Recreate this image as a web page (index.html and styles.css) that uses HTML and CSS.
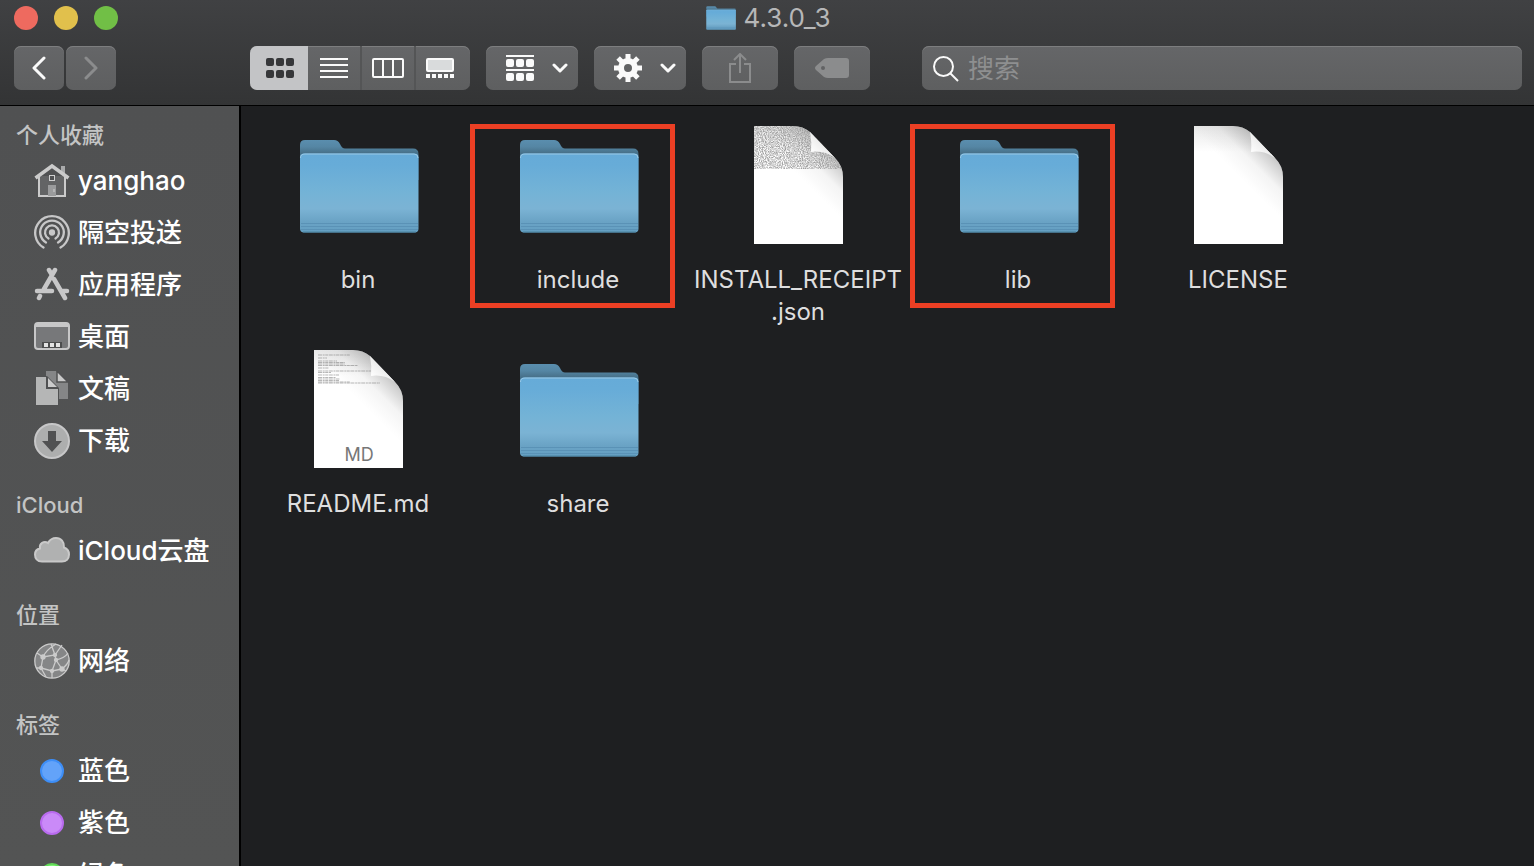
FILE: index.html
```html
<!DOCTYPE html>
<html lang="zh-CN">
<head>
<meta charset="utf-8">
<meta name="viewport" content="width=device-width, initial-scale=1">
<title>4.3.0_3</title>
<link rel="stylesheet" href="styles.css">
</head>
<body>
<svg class="defs" aria-hidden="true">
  <defs>
    <linearGradient id="folder-back" x1="0" y1="0" x2="0" y2="1">
      <stop offset="0" stop-color="#5a8eae"/><stop offset=".17" stop-color="#5586a4"/><stop offset=".35" stop-color="#456d85"/><stop offset="1" stop-color="#456d85"/>
    </linearGradient>
    <linearGradient id="folder-front" x1="0" y1="0" x2="0" y2="1">
      <stop offset="0" stop-color="#66abd8"/><stop offset=".15" stop-color="#67acd8"/><stop offset=".5" stop-color="#74b3d6"/><stop offset=".7" stop-color="#7bb3d4"/><stop offset=".86" stop-color="#6aa3c5"/><stop offset="1" stop-color="#649fc2"/>
    </linearGradient>
    <linearGradient id="page-shade" gradientUnits="userSpaceOnUse" x1="61" y1="52" x2="88" y2="25">
      <stop offset="0" stop-color="#777" stop-opacity="0"/><stop offset=".5" stop-color="#777" stop-opacity=".08"/><stop offset="1" stop-color="#777" stop-opacity=".4"/>
    </linearGradient>
    <linearGradient id="page-top" x1="0" y1="0" x2="0" y2="1">
      <stop offset="0" stop-color="#e9e9e9"/><stop offset=".22" stop-color="#fff"/>
    </linearGradient>
    <linearGradient id="page-curl" gradientUnits="userSpaceOnUse" x1="76" y1="32" x2="88" y2="20">
      <stop offset="0" stop-color="#fff"/><stop offset="1" stop-color="#e9e9e9"/>
    </linearGradient>
    <filter id="tiny-text" x="0" y="0" width="1" height="1">
      <feTurbulence type="fractalNoise" baseFrequency=".95 .8" numOctaves="2" seed="4"/>
      <feColorMatrix values="0 0 0 0 .35  0 0 0 0 .35  0 0 0 0 .35  2.4 0 0 0 -.75"/>
    </filter>
    <clipPath id="page-clip"><path d="M20 6H59Q69 6 76 12L101 38Q109 46 109 57V124H20Z"/></clipPath>
    <symbol id="folder" viewBox="0 0 128 128">
      <path d="M6 25Q6 20 11 20H40Q44 20 46 24Q48 28.500 51 28.500H119Q124.500 28.500 124.500 34V60H6Z" fill="url(#folder-back)"/>
      <rect x="6" y="33.500" width="118.500" height="79" rx="4" fill="url(#folder-front)"/>
      <path d="M6.500 38Q6.500 34 11 34H120Q124 34 124 38" fill="none" stroke="#9ac9e6"/>
      <path d="M7 103.500H124M7 106.500H124M7 109.500H124" stroke="#5a92b6" stroke-width="1"/>
      <path d="M9 112H122" stroke="#4b829f"/>
    </symbol>
    <symbol id="page" viewBox="0 0 128 128">
      <path d="M20 6H59Q69 6 76 12L101 38Q109 46 109 57V124H20Z" fill="url(#page-top)"/>
      <path d="M20 6H59Q69 6 76 12L101 38Q109 46 109 57V124H20Z" fill="url(#page-shade)"/>
    </symbol>
    <symbol id="curl" viewBox="0 0 128 128">
      <path d="M76 12Q78 22 77 32Q90 30 101 38Z" fill="url(#page-curl)"/>
    </symbol>
    <symbol id="chevron-down" viewBox="0 0 16 10">
      <path d="M2 2L8 8L14 2" fill="none" stroke="currentColor" stroke-width="3" stroke-linecap="round" stroke-linejoin="round"/>
    </symbol>
  </defs>
</svg>

<div class="window">
  <header class="titlebar">
    <div class="title-row">
      <div class="lights">
        <button class="light light-close" aria-label="关闭"></button>
        <button class="light light-min" aria-label="最小化"></button>
        <button class="light light-zoom" aria-label="缩放"></button>
      </div>
      <h1 class="title">
        <svg width="30" height="24" viewBox="5 19 120 94" preserveAspectRatio="none" aria-hidden="true"><use href="#folder" width="128" height="128"/></svg>
        <span>4.3.0_3</span>
      </h1>
    </div>
    <div class="toolbar">
      <div class="nav-buttons">
        <button class="tool tool-nav" aria-label="后退"><svg width="14" height="24" viewBox="0 0 14 24"><path d="M12 2L2 12L12 22" fill="none" stroke="currentColor" stroke-width="3" stroke-linecap="round" stroke-linejoin="round"/></svg></button>
        <button class="tool tool-nav" aria-label="前进" disabled><svg width="14" height="24" viewBox="0 0 14 24"><path d="M2 2L12 12L2 22" fill="none" stroke="currentColor" stroke-width="3" stroke-linecap="round" stroke-linejoin="round"/></svg></button>
      </div>
      <div class="views" role="group" aria-label="显示方式">
        <button class="view view-active" aria-label="图标" aria-pressed="true"><svg width="28" height="20" fill="currentColor"><rect width="8" height="8" rx="2"/><rect x="10" width="8" height="8" rx="2"/><rect x="20" width="8" height="8" rx="2"/><rect y="12" width="8" height="8" rx="2"/><rect x="10" y="12" width="8" height="8" rx="2"/><rect x="20" y="12" width="8" height="8" rx="2"/></svg></button>
        <button class="view view-divided" aria-label="列表"><svg width="28" height="20"><path d="M0 1H28M0 7H28M0 13H28M0 19H28" stroke="currentColor" stroke-width="2"/></svg></button>
        <button class="view view-divided" aria-label="分栏"><svg width="32" height="20"><path d="M2 1H30Q31 1 31 2V18Q31 19 30 19H2Q1 19 1 18V2Q1 1 2 1ZM11 1V19M21 1V19" fill="none" stroke="currentColor" stroke-width="2"/></svg></button>
        <button class="view view-last" aria-label="画廊"><svg width="28" height="20"><rect x="1" y="1" width="26" height="12" rx="1" fill="#d9dbdc" stroke="currentColor" stroke-width="2"/><path d="M0 16H4V20H0ZM6 16H10V20H6ZM12 16H16V20H12ZM18 16H22V20H18ZM24 16H28V20H24Z" fill="currentColor"/></svg></button>
      </div>
      <button class="tool tool-menu" aria-label="分组"><svg width="28" height="26" fill="currentColor"><path d="M0 0H28V2H0ZM0 14H28V16H0Z"/><rect y="4" width="8" height="8" rx="2"/><rect x="10" y="4" width="8" height="8" rx="2"/><rect x="20" y="4" width="8" height="8" rx="2"/><rect y="18" width="8" height="8" rx="2"/><rect x="10" y="18" width="8" height="8" rx="2"/><rect x="20" y="18" width="8" height="8" rx="2"/></svg><svg width="16" height="10"><use href="#chevron-down"/></svg></button>
      <button class="tool tool-menu" aria-label="操作"><svg width="28" height="28" viewBox="-14 -14 28 28"><circle r="7" fill="none" stroke="currentColor" stroke-width="6"/><g stroke="currentColor" stroke-width="5"><path d="M0 -14V-8M0 8V14M-14 0H-8M8 0H14"/><path transform="rotate(45)" d="M0 -14V-8M0 8V14M-14 0H-8M8 0H14"/></g></svg><svg width="16" height="10"><use href="#chevron-down"/></svg></button>
      <button class="tool tool-plain" aria-label="共享" disabled><svg width="22" height="30" viewBox="0 0 22 30"><path d="M7 11H1V29H21V11H15M11 20V1M5 7L11 1L17 7" fill="none" stroke="currentColor" stroke-width="2"/></svg></button>
      <button class="tool tool-plain" aria-label="编辑标签" disabled><svg width="34" height="20" viewBox="0 0 34 20"><path fill-rule="evenodd" d="M9 1Q11 0 13 0H31Q34 0 34 3V17Q34 20 31 20H13Q11 20 9 19L1 12Q-1 10 1 8ZM8 8A2 2 0 1 0 8 12A2 2 0 1 0 8 8Z" fill="currentColor"/></svg></button>
      <label class="search">
        <svg width="26" height="26" aria-hidden="true"><circle cx="10.500" cy="10.500" r="9.500" fill="none" stroke="currentColor" stroke-width="2"/><path d="M17 17L25 25" stroke="currentColor" stroke-width="2"/></svg>
        <input type="search" placeholder="搜索" aria-label="搜索">
      </label>
    </div>
  </header>

  <div class="body">
    <nav class="sidebar" aria-label="边栏">
      <section class="group">
        <h2>个人收藏</h2>
        <a href="#home"><svg viewBox="0 0 36 36"><path d="M27 3H31V12L27 9Z" fill="#a9aaab"/><path d="M5 13V33H31V13" fill="#636465" stroke="#cbcbcb" stroke-width="2"/><path d="M1.500 15L18 3L34.500 15" fill="none" stroke="#cbcbcb" stroke-width="3.500"/><rect x="15.500" y="12.500" width="5" height="5" fill="#505152" stroke="#d0d0d0"/><rect x="14" y="22" width="8" height="11" fill="#9a9b9c"/><path d="M20 26V29" stroke="#d0d0d0"/></svg>yanghao</a>
        <a href="#airdrop"><svg viewBox="0 0 36 36" fill="none" stroke="#c7c7c8" stroke-width="2.300" stroke-linecap="round"><path d="M9.500 32.500A16.800 16.800 0 1 1 26.500 32.500"/><path d="M12 27.500A11.800 11.800 0 1 1 24 27.500"/><path d="M14.500 23.500A7 7 0 1 1 21.500 23.500"/><circle cx="18" cy="17.500" r="2" fill="#c7c7c8"/></svg>隔空投送</a>
        <a href="#applications"><svg viewBox="0 0 36 36" fill="none" stroke="#c7c7c8" stroke-width="4.500" stroke-linecap="round"><path d="M21 3L10 22M15 3L18 8M20 12L31 31M3 24H18M27 24H33M6 29L5 31"/></svg>应用程序</a>
        <a href="#desktop"><svg viewBox="0 0 36 36"><rect x="1" y="4" width="34" height="26" rx="3" fill="#77787a" stroke="#c7c7c8" stroke-width="2"/><path d="M2 4H34V8H2Z" fill="#c7c7c8"/><rect x="8" y="23" width="20" height="6" fill="#4c4d4e"/><path d="M10 24H14V28H10ZM16 24H20V28H16ZM22 24H26V28H22Z" fill="#e3e3e3"/></svg>桌面</a>
        <a href="#documents"><svg viewBox="0 0 36 36"><path d="M12 0H22L34 11V28H12Z" fill="#858687"/><path d="M23 0L34 11H23Z" fill="#c9c9c9" stroke="#505152" stroke-width="1.500"/><path d="M1 5H13L25 17V35H1Z" fill="#505152"/><path d="M2 6H12V18H24V34H2Z" fill="#b5b6b6"/><path d="M14 7L23 16H14Z" fill="#cbcbcb"/></svg>文稿</a>
        <a href="#downloads"><svg viewBox="0 0 36 36"><circle cx="18" cy="18" r="17" fill="#adaeae" stroke="#c7c7c8" stroke-width="2"/><path d="M14 8H22V18H28L18 29L8 18H14Z" fill="#505152"/></svg>下载</a>
      </section>
      <section class="group">
        <h2>iCloud</h2>
        <a href="#icloud"><svg viewBox="0 0 36 36"><path d="M8 28.500C3 28.500 1 25 1 21.500C1 18 3.500 16 6 15.500C5 10.500 10 7.500 14 10C16 6.500 19 5 22 5C27 5 30.500 9 30 14.500C33 15.500 35 18 35 21.500C35 26 32 28.500 28 28.500Z" fill="#b0b1b1" stroke="#c9c9c9" stroke-width="2"/></svg>iCloud云盘</a>
      </section>
      <section class="group">
        <h2>位置</h2>
        <a href="#network"><svg viewBox="0 0 36 36" fill="none" stroke="#cbcbcb" stroke-width="1.300"><circle cx="18" cy="18" r="17.200" fill="#858687"/><path d="M3 10L9 14L21 12L28 2M9 14L7 25L18 28L28 26L22 17L21 12L17 1M9 14Q12 7 22 1M22 17Q31 15 34 10M7 25L2 25M18 28L18 35M28 26L32 28M22 17L18 28M28 26Q34 21 35 17M7 25L12 34"/><g fill="#cbcbcb"><circle cx="9" cy="14" r="2"/><circle cx="21" cy="12" r="1.500"/><circle cx="22" cy="17" r="1.500"/><circle cx="7" cy="25" r="1.500"/><circle cx="18" cy="28" r="1.500"/><circle cx="28" cy="26" r="2"/></g></svg>网络</a>
      </section>
      <section class="group">
        <h2>标签</h2>
        <a href="#blue"><span class="dot dot-blue"></span>蓝色</a>
        <a href="#purple"><span class="dot dot-purple"></span>紫色</a>
        <a href="#green"><span class="dot dot-green"></span>绿色</a>
      </section>
    </nav>

    <main class="files">
      <figure class="file"><svg><use href="#folder"/></svg><figcaption>bin</figcaption></figure>
      <figure class="file file-marked"><svg><use href="#folder"/></svg><figcaption>include</figcaption></figure>
      <figure class="file"><svg viewBox="0 0 128 128"><use href="#page"/><g clip-path="url(#page-clip)"><rect x="20" y="6" width="90" height="43" filter="url(#tiny-text)"/></g><use href="#curl"/></svg><figcaption>INSTALL_RECEIPT<wbr>.json</figcaption></figure>
      <figure class="file file-marked"><svg><use href="#folder"/></svg><figcaption>lib</figcaption></figure>
      <figure class="file"><svg viewBox="0 0 128 128"><use href="#page"/><use href="#curl"/></svg><figcaption>LICENSE</figcaption></figure>
      <figure class="file"><svg viewBox="0 0 128 128"><use href="#page"/><g stroke="#777" stroke-width=".7" stroke-dasharray="4 .7 2 .5 3 .6" opacity=".75"><path d="M24 11H56M24 14H33M24 17H43M24 18.500H51M24 20H51M24 21.500H64M24 24H35M24 27H78M24 28.500H37M24 31H45M24 33.500H42M24 35H46M24 36.500H45M24 38H56M24 39H86"/></g><use href="#curl"/><text x="65" y="117" text-anchor="middle" class="page-kind">MD</text></svg><figcaption>README.md</figcaption></figure>
      <figure class="file"><svg><use href="#folder"/></svg><figcaption>share</figcaption></figure>
    </main>
  </div>
</div>
</body>
</html>
```

FILE: styles.css
```css
*, *::after { box-sizing: border-box; }

body {
  margin: 0;
  background: #1e1f21;
  font-family: "Inter", "Noto Sans CJK SC", sans-serif;
}

button, input { font: inherit; }
button { border: 0; padding: 0; }
h1, h2, figure { margin: 0; }
.defs { position: absolute; width: 0; height: 0; }

.window {
  display: flex;
  flex-direction: column;
  height: 100vh;
  overflow: hidden;
}

/* Title bar */
.titlebar {
  flex: none;
  padding: 0 12px 15px 14px;
  background: linear-gradient(#404143, #333435);
  border-bottom: 1px solid #000;
}

.title-row {
  display: grid;
  grid-template-columns: 1fr auto 1fr;
  align-items: center;
  height: 46px;
  padding-bottom: 10px;
}

.lights { display: flex; gap: 16px; }
.light { width: 24px; height: 24px; border-radius: 50%; }
.light-close { background: #ee6a5f; }
.light-min { background: #e1c04c; }
.light-zoom { background: #71bf46; }

.title {
  display: flex;
  align-items: center;
  gap: 8px;
  color: #b6b7b8;
  font-size: 26px;
  font-weight: 400;
  line-height: 32px;
}

.toolbar { display: flex; gap: 16px; height: 44px; }

.tool, .views, .search {
  border-radius: 7px;
  background: linear-gradient(#656668, #5e5f60);
  box-shadow: inset 0 1px #7d7e7f;
  color: #fafafa;
}

.tool {
  display: flex;
  align-items: center;
  justify-content: center;
}
.tool:disabled { color: #8b8c8d; }

.nav-buttons { display: flex; gap: 2px; margin-right: 118px; }
.tool-nav { width: 50px; }
.tool-menu { width: 92px; gap: 18px; padding-left: 10px; }
.tool-plain { width: 76px; }

.views { display: flex; overflow: hidden; }
.view {
  display: flex;
  align-items: center;
  justify-content: center;
  width: 54px;
  background: none;
  color: #fafafa;
}
.view-divided { border-right: 2px solid #545556; }
.view-last { padding-right: 6px; }
.view-active {
  width: 58px;
  padding-left: 2px;
  background: #c3c4c6;
  color: #363739;
}

.search {
  display: flex;
  flex: 1;
  align-items: center;
  gap: 9px;
  min-width: 0;
  margin-left: 36px;
  padding: 2px 11px 0;
}
.search svg { flex: none; }
.search input {
  flex: 1;
  min-width: 0;
  padding: 0;
  border: 0;
  outline: 0;
  background: none;
  color: #fff;
  font-size: 26px;
  line-height: 40px;
}
.search input::placeholder { color: #8e8f90; opacity: 1; }

/* Sidebar */
.body { display: flex; flex: 1; min-height: 0; }

.sidebar {
  flex: none;
  width: 241px;
  padding-top: 9px;
  overflow: hidden;
  border-right: 2px solid #000;
  background: linear-gradient(#505152, #535454);
}
.group + .group { margin-top: 18px; }
.group h2 {
  padding-left: 16px;
  color: #c3c4c4;
  font-size: 22px;
  font-weight: 500;
  line-height: 40px;
}
.group a {
  display: flex;
  align-items: center;
  gap: 8px;
  height: 52px;
  padding-left: 34px;
  color: #fff;
  font-size: 26px;
  font-weight: 500;
  line-height: 52px;
  text-decoration: none;
}
.group svg { flex: none; width: 36px; height: 36px; }

.dot {
  width: 24px;
  height: 24px;
  margin: 0 6px;
  border: 2px solid;
  border-radius: 50%;
}
.dot-blue { background: #63a3f9; border-color: #3d8ef7; }
.dot-purple { background: #ca8af8; border-color: #b96bef; }
.dot-green { background: #82f577; border-color: #62d958; }

/* Icon grid */
.files {
  display: grid;
  flex: 1;
  grid-template-columns: repeat(auto-fill, 220px);
  align-content: start;
  gap: 16px 0;
  padding: 14px 7px;
  background: #1e1f21;
}
.file {
  position: relative;
  display: flex;
  flex-direction: column;
  align-items: center;
  gap: 16px;
}
.file svg { width: 128px; height: 128px; }
.file figcaption {
  color: #dededf;
  font-size: 24px;
  line-height: 32px;
  text-align: center;
}
.file-marked::after {
  content: "";
  position: absolute;
  top: 4px;
  left: 2px;
  width: 205px;
  height: 184px;
  border: 5px solid #ec3f24;
}
.page-kind { fill: #777; font-size: 18px; }
```
